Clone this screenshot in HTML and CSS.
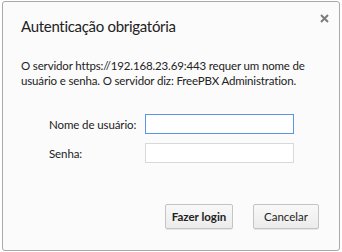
FILE: index.html
```html
<!DOCTYPE html>
<html lang="pt-BR">
<head>
    <meta charset="UTF-8">
    <title>Autenticação obrigatória</title>
    <link rel="stylesheet" href="styles.css">
</head>
<body>

    <div class="auth-dialog">
        <!-- Close Button -->
        <button class="close-btn" title="Fechar">
            <svg width="9" height="9" viewBox="0 0 9 9">
                <path d="M1 1 L8 8 M8 1 L1 8" stroke="#7b7b7b" stroke-width="2" fill="none"/>
            </svg>
        </button>

        <h2>Autenticação obrigatória</h2>

        <p class="auth-message">O servidor https://192.168.23.69:443 requer um nome de usuário e senha. O servidor diz: FreePBX Administration.</p>

        <div class="auth-form">
            <label for="userName">Nome de usuário:</label>
            <input type="text" id="userName" class="focused">
            <label for="userPass">Senha:</label>
            <input type="password" id="userPass">
        </div>

        <div class="auth-buttons">
            <button class="btn btn-primary">Fazer login</button>
            <button class="btn">Cancelar</button>
        </div>
    </div>

</body>
</html>
```
FILE: styles.css
```css
/* General Styling */
body {
    margin: 0;
    background: #ffffff;
    font-family: Lato, 'Noto Sans', sans-serif;
    color: #222;
}

.auth-dialog {
    position: relative;
    box-sizing: border-box;
    width: 338px;
    height: 250px;
    margin: 1px 2px;
    background: #fbfbfb;
    border: 1px solid #a9a9a9;
    border-radius: 3px;
    padding: 14px 20px 0 18px;
}

/* Close Button */
.close-btn {
    position: absolute;
    top: 11px;
    right: 9px;
    width: 11px;
    height: 11px;
    padding: 1px;
    border: none;
    background: none;
    cursor: pointer;
    line-height: 0;
}

h2 {
    margin: 0;
    font-size: 15px;
    font-weight: normal;
    letter-spacing: -0.3px;
    line-height: 20px;
    color: #222;
}

.auth-message {
    margin: 22px 0 0;
    font-size: 11.5px;
    letter-spacing: -0.15px;
    line-height: 15px;
}

/* Form */
.auth-form {
    display: grid;
    grid-template-columns: 96px 149px;
    row-gap: 9px;
    align-items: center;
    margin: 26px 0 0 28px;
    font-size: 11.5px;
    letter-spacing: -0.1px;
}

.auth-form input {
    box-sizing: border-box;
    height: 20px;
    width: 149px;
    margin: 0;
    border: 1px solid #d9d9d9;
    background: #ffffff;
    outline: none;
}

.auth-form input.focused {
    border-color: #5b95ea;
}

/* Buttons */
.auth-buttons {
    display: flex;
    justify-content: flex-end;
    gap: 20px;
    margin-top: 41px;
}

.btn {
    box-sizing: border-box;
    height: 25px;
    width: 66px;
    padding: 0;
    font-family: Lato, 'Noto Sans', sans-serif;
    font-size: 11.5px;
    color: #222;
    background: linear-gradient(#f8f8f8, #ececec);
    border: 1px solid #c4c4c4;
    border-radius: 2px;
    box-shadow: 0 1px 0 rgba(0,0,0,0.08);
    cursor: pointer;
}

.btn-primary {
    width: 68px;
    font-weight: bold;
}
```
